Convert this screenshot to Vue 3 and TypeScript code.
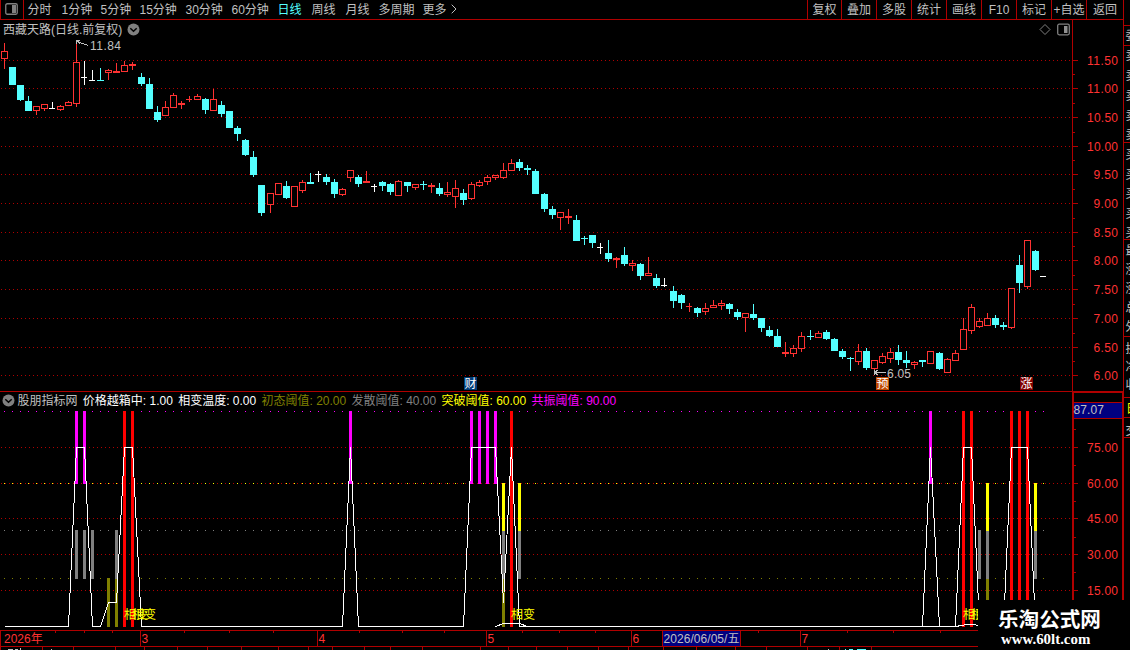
<script setup lang="ts">
type Kind = 'r' | 'c' | 'w'
interface Candle { x: number; high: number; top: number; bottom: number; low: number; kind: Kind }

const periods = ['分时', '1分钟', '5分钟', '15分钟', '30分钟', '60分钟', '日线', '周线', '月线', '多周期', '更多']
const tools = ['复权', '叠加', '多股', '统计', '画线', 'F10', '标记', '+自选', '返回']

// Each entry: centre x, high, body top, body bottom, low, kind
const source = `
4 43 51 59 69 r|12 67 67 85 85 c|20 85 85 100 101 c|28 96 101 111 111 c|36 106 106 111 115 r|44 104 104 109 111 r
52 102 108 109 109 w|60 105 106 110 111 r|68 101 102 106 106 r|76 42 62 104 107 r|84 61 77 78 85 w|92 70 80 81 81 w
100 68 80 81 81 c|108 69 70 73 80 r|116 63 71 73 73 r|124 61 65 72 72 r|132 62 64 66 70 r|141 73 77 84 86 c
149 78 84 109 109 c|157 106 112 120 122 c|165 101 107 116 116 r|173 93 95 108 108 r|181 101 103 105 109 r|189 96 99 100 102 r
197 94 96 100 100 r|205 98 99 110 114 c|213 89 99 111 111 r|221 101 105 114 117 c|229 111 111 128 128 c|237 126 128 134 141 c
245 139 140 155 156 c|253 151 157 175 177 c|261 185 185 213 216 c|270 193 193 205 213 r|278 183 183 195 195 r|286 181 186 198 199 c
294 186 186 207 207 r|302 180 182 191 193 r|310 173 182 184 184 c|318 171 174 175 182 w|326 174 177 182 185 c|334 179 182 194 198 c
342 188 189 195 196 r|350 170 170 178 182 r|358 175 177 184 187 c|366 171 181 183 183 r|374 184 186 187 192 w|382 181 182 186 191 c
390 183 184 192 195 c|398 180 181 196 196 r|407 182 182 186 192 c|415 184 184 188 190 r|423 181 184 185 190 c|431 183 185 187 193 r
439 183 188 194 196 c|447 182 192 195 197 r|455 180 188 197 208 r|463 189 193 200 205 c|471 182 184 199 200 r|479 180 182 186 187 r
487 175 177 182 185 r|495 175 175 178 180 r|503 163 170 178 179 r|511 159 163 171 171 r|519 159 162 168 171 c|527 165 168 170 175 c
535 169 171 194 194 c|544 193 194 209 212 c|552 206 209 215 219 c|560 212 212 218 230 r|568 209 216 218 224 r|576 215 220 241 241 c
584 236 238 239 245 c|592 235 235 243 248 c|600 243 247 248 254 w|608 240 253 259 262 c|616 257 258 260 268 r|624 247 255 264 266 c
632 260 263 266 271 r|640 263 264 276 280 c|648 257 273 276 276 r|656 274 278 286 288 c|664 278 285 286 287 w|673 286 291 301 308 c
681 294 295 303 309 c|689 303 306 307 312 r|697 307 308 313 317 c|705 303 308 312 315 r|713 300 305 308 308 r|721 300 303 306 310 r
729 303 304 309 314 c|737 309 312 317 320 c|745 313 313 318 332 r|753 304 314 318 320 c|761 318 318 328 332 c|769 326 330 336 337 c
777 329 336 347 347 c|785 342 352 354 357 r|793 345 348 354 357 r|801 332 336 349 352 r|810 330 336 337 340 c|818 331 333 338 338 r
826 330 332 339 340 c|834 338 339 351 351 c|842 349 351 357 359 c|850 357 358 359 371 c|858 344 351 362 365 r|866 348 351 368 370 c
874 360 360 369 372 r|882 353 356 363 364 r|890 348 352 359 363 r|898 345 352 360 365 c|906 351 360 363 368 c|914 361 362 365 369 r
922 360 360 362 367 c|930 351 351 364 364 r|939 352 353 369 370 c|947 358 359 373 373 r|955 350 353 361 361 r|963 318 329 350 350 r
971 304 307 331 334 r|979 318 321 327 328 r|987 313 318 326 326 r|995 315 318 325 328 c|1003 322 325 327 330 c|1011 288 288 328 329 r
1019 255 265 283 293 c|1027 240 240 287 289 r|1035 250 251 270 271 c|1043 276 276 277 277 w`

const candles: Candle[] = source.trim().split(/[|\n]/).map((row) => {
  const p = row.trim().split(' ')
  return { x: +p[0], high: +p[1], top: +p[2], bottom: +p[3], low: +p[4], kind: p[5] as Kind }
})
const bodyWidth = (c: Candle) => (c.kind !== 'c' && c.bottom - c.top === 1 ? 6 : 7)

const priceTicks = [
  [60, '11.50'], [88, '11.00'], [117, '10.50'], [146, '10.00'], [174, '9.50'], [203, '9.00'],
  [232, '8.50'], [260, '8.00'], [289, '7.50'], [318, '7.00'], [347, '6.50'], [375, '6.00'],
] as [number, string][]
const priceMinor = [74, 103, 132, 160, 189, 218, 246, 275, 304, 333, 361]
const valueTicks = [[447, '75.00'], [483, '60.00'], [518, '45.00'], [554, '30.00'], [590, '15.00']] as [number, string][]
const valueMinor = [429, 465, 501, 537, 572, 608]

const levels = [
  { y: 411, cls: 'magenta' }, { y: 483, cls: 'yellow' }, { y: 530, cls: 'gray' }, { y: 578, cls: 'olive' },
]
const barGroups = [
  { cls: 'magenta', y: 411, h: 73, xs: [76, 84, 350, 471, 479, 487, 495, 930] },
  { cls: 'olive', y: 578, h: 49, xs: [108, 116, 503, 987] },
  { cls: 'gray', y: 530, h: 49, xs: [76, 84, 92, 116, 503, 519, 979, 987, 1035] },
  { cls: 'yellow', y: 483, h: 48, xs: [503, 519, 987, 1035] },
  { cls: 'red', y: 411, h: 216, xs: [124, 132, 511, 963, 971, 1011, 1019, 1027] },
]
const signal = [
  [4, 626], [68, 626], [76, 447], [84, 447], [92, 626], [100, 626], [108, 602], [116, 602], [124, 447], [132, 447],
  [141, 626], [342, 626], [350, 447], [358, 626], [463, 626], [471, 447], [495, 447], [503, 602], [511, 447],
  [519, 626], [922, 626], [930, 447], [939, 626], [955, 626], [963, 447], [971, 447], [979, 626], [1003, 626],
  [1011, 447], [1027, 447], [1035, 626], [1043, 626],
].map(([x, y]) => `${x + 0.5},${y + 0.5}`).join(' ')
const phaseMarks = [124, 132, 511, 963, 971]

const readings = [
  { text: '价格越箱中: 1.00', cls: 'white' }, { text: '相变温度: 0.00', cls: 'white' },
  { text: '初态阈值: 20.00', cls: 'olive' }, { text: '发散阈值: 40.00', cls: 'gray' },
  { text: '突破阈值: 60.00', cls: 'yellow' }, { text: '共振阈值: 90.00', cls: 'magenta' },
]

const months = [[140, '3'], [317, '4'], [486, '5'], [631, '6'], [800, '7']] as [number, string][]
const weekTicks = [55, 84, 112, 184, 229, 273, 359, 402, 444, 522, 559, 595, 758, 847, 893, 940]
const lowerTicks = [0, 42, 73, 115, 144, 177, 207, 241, 278, 308, 332, 364, 390, 422, 480, 508, 536, 567, 598, 628, 663, 696, 735, 766, 807, 839, 871]

const side = [
  [35, '委'], [55, '卖'], [75, '卖'], [95, '卖'], [115, '卖'], [134, '卖'], [154, '买'], [174, '买'], [193, '买'],
  [213, '买'], [232, '买'], [250, '最'], [269, '涨'], [288, '涨'], [307, '总'], [326, '外'], [348, '换'], [366, '净'], [384, '收'], [430, '交'],
] as [number, string][]
const sideLines = [25, 45, 142, 239, 336, 397, 417, 437]
</script>

<template>
  <main class="terminal">
    <header class="toolbar">
      <div class="layout-toggle">
        <svg width="13" height="12" viewBox="0 0 13 12"><rect x=".75" y=".75" width="11.5" height="10.5" rx="1.5" fill="none" stroke="#808080" stroke-width="1.3" /><rect x="7" y="2" width="4" height="8" fill="#808080" /></svg>
      </div>
      <nav class="periods">
        <span v-for="p in periods" :key="p" :class="{ active: p === '日线' }">{{ p }}<svg v-if="p === '更多'" class="more" width="6" height="10" viewBox="0 0 6 10"><path d="M.7.7 5 5 .7 9.3" fill="none" stroke="#c0c0c0" /></svg></span>
      </nav>
      <nav class="tools">
        <span v-for="t in tools" :key="t">{{ t }}</span>
      </nav>
    </header>

    <div class="body">
      <section class="charts">
        <div class="price">
          <div class="price-title">
            <span>西藏天路(日线.前复权)</span>
            <svg class="round" width="13" height="13" viewBox="0 0 13 13"><circle cx="6.5" cy="6.5" r="6" fill="#808080" /><path d="M3.3 5.3 6.5 8.2 9.7 5.3" fill="none" stroke="#000" stroke-width="1.5" /></svg>
            <svg class="corner" width="31" height="13" viewBox="0 0 31 13"><path d="M6 1.5 11 6.5 6 11.5 1 6.5Z" fill="none" stroke="#808080" /><rect x="18.7" y="1.2" width="11.6" height="10.6" rx="1.5" fill="none" stroke="#808080" stroke-width="1.3" /><rect x="25" y="3" width="3.5" height="7" fill="#909090" /></svg>
          </div>
          <svg class="plot" width="1072" height="352" viewBox="0 39 1072 352">
            <line v-for="[y] in priceTicks" :key="y" x1="1" x2="1071" :y1="y + 0.5" :y2="y + 0.5" class="grid" />
            <g v-for="c in candles" :key="c.x" :class="'k-' + c.kind">
              <rect :x="c.x" :y="c.high" width="1" :height="c.low - c.high" />
              <rect :x="c.x - 3" :y="c.top" :width="bodyWidth(c)" :height="c.bottom - c.top" />
              <rect v-if="c.kind === 'r' && c.bottom - c.top > 2" class="hollow" :x="c.x - 2" :y="c.top + 1" width="5" :height="c.bottom - c.top - 2" />
            </g>
            <path d="M76.5 43.5V40.5H80M77 40.5 80 43.5M80 42.5 88 45.5M874.5 372.5H886M874.5 372.5 878 370M874.5 372.5 878 375M874.5 370V375" class="pointer" />
            <text x="90" y="50" class="note" textLength="31">11.84</text>
            <text x="887" y="378" class="note" textLength="24">6.05</text>
            <g class="badge">
              <rect x="464" y="377" width="13" height="13" fill="#003c78" /><text x="464.5" y="388">财</text>
              <rect x="876" y="377" width="13" height="13" fill="#c04800" /><text x="876.5" y="388">预</text>
              <rect x="1020" y="377" width="13" height="13" fill="#800000" /><text x="1020.5" y="388">涨</text>
            </g>
          </svg>
        </div>
        <svg class="price-axis" width="51" height="371" viewBox="1072 20 51 371">
          <rect x="1072" y="20" width="1" height="371" />
          <rect v-for="y in priceMinor" :key="y" x="1073" :y="y" width="2" height="1" />
          <g v-for="[y, t] in priceTicks" :key="t">
            <rect x="1073" :y="y" width="5" height="1" />
            <text :x="t.length > 4 ? 1087 : 1093.5" :y="y + 5" :textLength="t.length > 4 ? 31 : 24.5">{{ t }}</text>
          </g>
        </svg>

        <div class="indicator">
          <div class="readings">
            <svg class="round" width="13" height="13" viewBox="0 0 13 13"><circle cx="6.5" cy="6.5" r="6" fill="#808080" /><path d="M3.3 5.3 6.5 8.2 9.7 5.3" fill="none" stroke="#000" stroke-width="1.5" /></svg>
            <span class="source">股朋指标网</span>
            <span v-for="r in readings" :key="r.text" :class="r.cls">{{ r.text }}</span>
          </div>
          <svg class="plot" width="1072" height="220" viewBox="0 410 1072 220">
            <line v-for="[y] in valueTicks" :key="y" x1="1" x2="1071" :y1="y + 0.5" :y2="y + 0.5" class="grid" />
            <g v-for="l in levels" :key="l.y" :class="l.cls">
              <rect v-for="c in candles" :key="c.x" :x="c.x" :y="l.y" width="1" height="1" />
            </g>
            <g v-for="g in barGroups" :key="g.cls" :class="g.cls">
              <rect v-for="x in g.xs" :key="x" :x="x - 1" :y="g.y" width="3" :height="g.h" />
            </g>
            <polyline :points="signal" class="signal" />
            <polyline points="495.5,626.5 503.5,623.5 519.5,623.5 527.5,626.5 955.5,626.5 967.5,624.5 974.5,624.5 979.5,626.5" class="signal" />
            <text v-for="x in phaseMarks" :key="x" :x="x" y="619" class="yellow">相变</text>
          </svg>
        </div>
        <svg class="value-axis" width="51" height="239" viewBox="1072 391 51 239">
          <path d="M1072 391H1123V393H1072ZM1072 392H1074V630H1072ZM1122 392H1123V630H1122ZM1074 402H1122V403H1074ZM1074 418H1122V419H1074Z" />
          <rect x="1074" y="403" width="48" height="15" class="cursor-value" />
          <text x="1073.5" y="414" class="cursor-text" textLength="30.5">87.07</text>
          <rect v-for="y in valueMinor" :key="y" x="1074" :y="y" width="2" height="1" />
          <g v-for="[y, t] in valueTicks" :key="t">
            <rect x="1074" :y="y" width="4" height="1" />
            <text x="1087" :y="y + 5" textLength="31">{{ t }}</text>
          </g>
        </svg>

        <svg class="time-axis" width="1123" height="20" viewBox="0 630 1123 20">
          <rect x="0" y="630" width="1123" height="1" /><rect x="0" y="646" width="1123" height="1" />
          <rect x="0" y="630" width="1" height="16" />
          <text x="4" y="643">2026年</text>
          <g v-for="[x, t] in months" :key="t">
            <rect :x="x" y="630" width="1" height="16" />
            <text :x="x + 1.5" y="643">{{ t }}</text>
          </g>
          <rect v-for="x in weekTicks" :key="x" :x="x" y="631" width="1" height="2" />
          <rect v-for="x in lowerTicks" :key="'l' + x" :x="x" y="647" width="1" height="3" />
          <rect x="662" y="630" width="79" height="17" /><rect x="663" y="631" width="77" height="15" class="cursor-value" />
          <text x="663.5" y="643" class="cursor-text" textLength="76">2026/06/05/五</text>
          <path d="M8 649h5v1h-5zM15 649h3v1h-3zM20 648h1v2h-1zM51 649h1v1h-1zM828 649h1v1h-1z" fill="#c0c0c0" />
          <path d="M845 649h1v1h-1zM849 649h4v1h-4zM857 649h9v1h-9z" fill="#54ffff" />
        </svg>
      </section>
      <svg class="side" width="7" height="630" viewBox="1123 20 7 630">
        <rect x="1123" y="20" width="1" height="630" />
        <rect v-for="y in sideLines" :key="y" x="1123" :y="y" width="7" height="1" />
        <text v-for="[y, t] in side" :key="y" x="1125.5" :y="y + 4.5">{{ t }}</text>
        <text x="1126" y="413" class="yellow">日</text>
      </svg>
    </div>

    <aside class="brand">
      <strong>乐淘公式网</strong>
      <em>www.60lt.com</em>
    </aside>
  </main>
</template>

<style>
body { background: #000; overflow: hidden; }
</style>

<style scoped>
.terminal { position: relative; width: 1130px; height: 650px; overflow: hidden; background: #000; color: #c0c0c0; font: 12px/19px "Liberation Sans", "Noto Sans CJK SC", sans-serif; white-space: nowrap; }
svg { display: block; flex: none; }
svg text { font: 12px "Liberation Sans", "Noto Sans CJK SC", sans-serif; }
.toolbar { display: flex; width: 1124px; height: 20px; box-sizing: border-box; border-bottom: 1px solid #b00000; line-height: 21px; }
.layout-toggle { width: 24px; height: 19px; box-sizing: border-box; border-left: 1px solid #b00000; border-right: 1px solid #b00000; padding: 3px 0 0 4px; }
.periods { display: grid; grid-template-columns: 34px 39px 39px 46px 46px 46px 34px 34px 33px 44px auto; height: 19px; padding-left: 3.5px; }
.periods .active { color: #54ffff; }
.more { display: inline-block; margin-left: 4px; }
.tools { display: grid; grid-template-columns: 34px repeat(7, 35px) 38px; height: 19px; margin-left: auto; text-align: center; }
.tools span { height: 19px; border-left: 1px solid #b00000; }
.tools span:last-child { border-right: 1px solid #b00000; }
.body { display: flex; }
.charts { display: grid; grid-template: 371px 239px 20px / 1072px 51px; width: 1123px; }
.price-title { display: flex; align-items: center; height: 19px; padding-left: 3px; line-height: 17px; }
.price-title span { padding-top: 2px; }
.round { margin-left: 5px; }
.corner { margin-left: auto; margin-right: 2px; }
.indicator { box-sizing: border-box; border-top: 1px solid #b00000; }
.readings { display: flex; align-items: center; gap: 5.3px; height: 18px; line-height: 17px; }
.readings .round { margin-left: 1.5px; margin-right: -2.3px; margin-top: -1px; }
.time-axis { grid-column: 1 / 3; }
.plot, .price-axis, .value-axis, .time-axis, .side { shape-rendering: crispEdges; fill: #b00000; }
.grid { stroke: #b00000; stroke-width: 1; stroke-dasharray: 1 3; }
.price-axis text, .value-axis text, .time-axis text { fill: #ff3232; }
.k-r { fill: #ff3232; }
.k-c { fill: #54ffff; }
.k-w { fill: #fff; }
.hollow { fill: #000; }
.pointer { fill: none; stroke: #c0c0c0; }
.note, .side text { fill: #c0c0c0; }
.badge text { fill: #fff; }
.white { color: #fff; }
.magenta { fill: #f0f; color: #f0f; }
.yellow, .side .yellow { fill: #ff0; color: #ff0; }
.gray { fill: #808080; color: #808080; }
.olive { fill: #808000; color: #808000; }
.red { fill: #f00; }
.signal { fill: none; stroke: #fff; stroke-width: 1; }
.cursor-value { fill: #000080; }
.value-axis .cursor-text, .time-axis .cursor-text { fill: #c0c0c0; }
.brand { position: absolute; right: 0; bottom: 0; width: 152px; height: 50px; box-sizing: border-box; padding: 7px 0 0 20px; background: #000; color: #fff; }
.brand strong { display: block; font: 700 20.6px/23px "Noto Sans CJK SC", sans-serif; }
.brand em { display: block; padding-left: 3px; font: 700 14.9px/18px "Liberation Serif", serif; }
</style>
